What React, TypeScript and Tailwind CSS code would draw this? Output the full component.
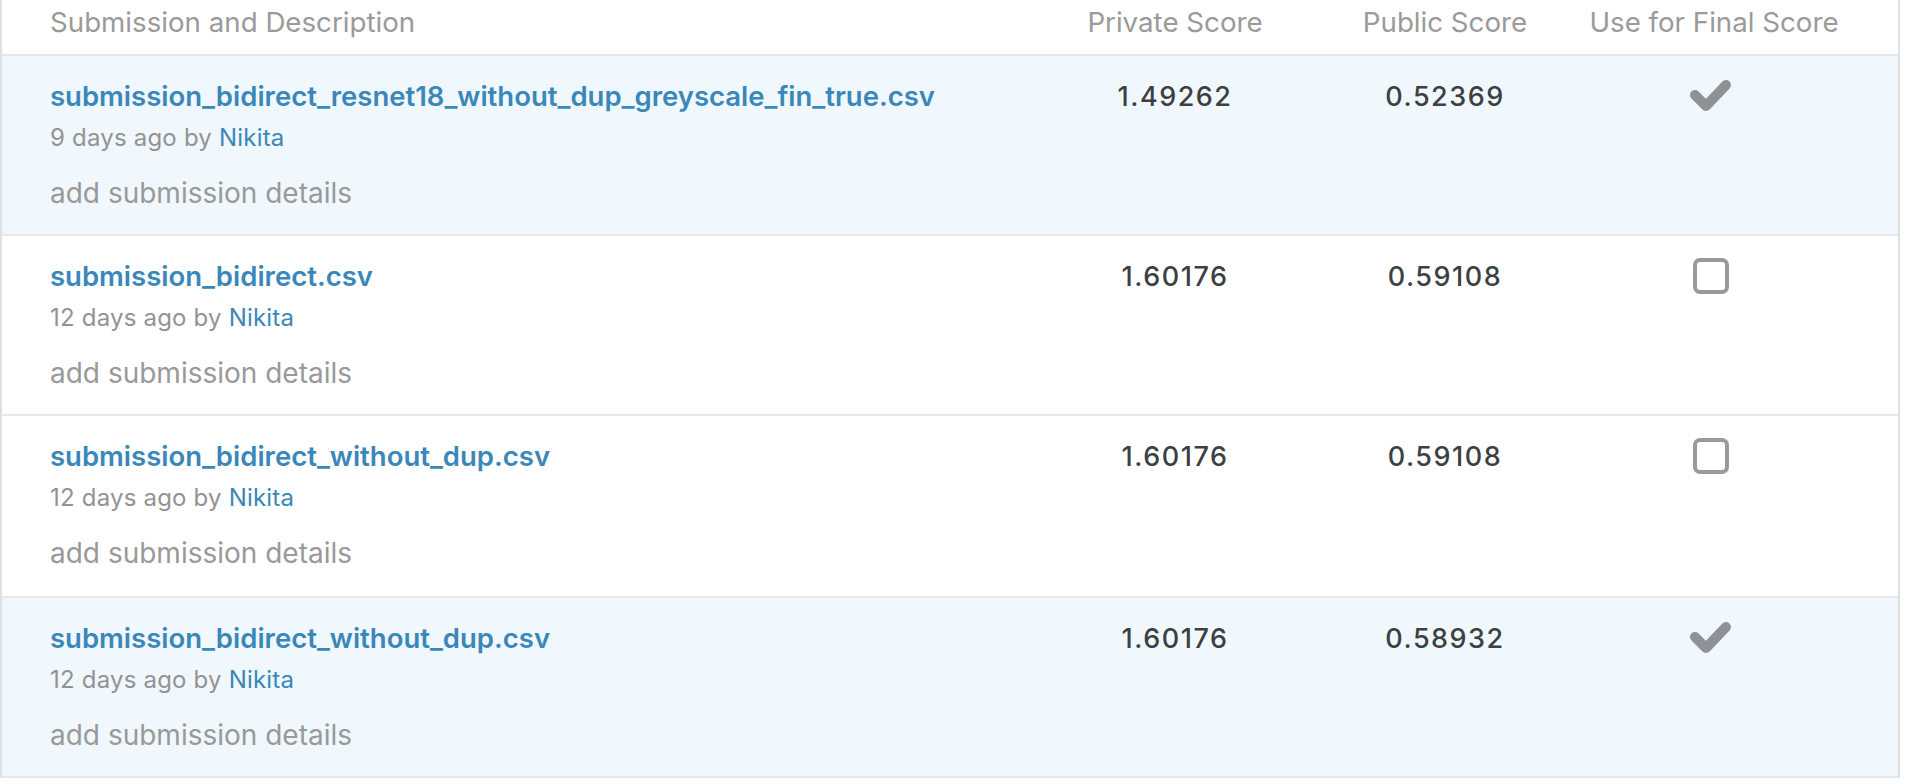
import React from "react";

interface Submission {
  file: string;
  ago: string;
  author: string;
  privateScore: string;
  publicScore: string;
  selected: boolean;
}

const submissions: Submission[] = [
  {
    file: "submission_bidirect_resnet18_without_dup_greyscale_fin_true.csv",
    ago: "9 days ago",
    author: "Nikita",
    privateScore: "1.49262",
    publicScore: "0.52369",
    selected: true,
  },
  {
    file: "submission_bidirect.csv",
    ago: "12 days ago",
    author: "Nikita",
    privateScore: "1.60176",
    publicScore: "0.59108",
    selected: false,
  },
  {
    file: "submission_bidirect_without_dup.csv",
    ago: "12 days ago",
    author: "Nikita",
    privateScore: "1.60176",
    publicScore: "0.59108",
    selected: false,
  },
  {
    file: "submission_bidirect_without_dup.csv",
    ago: "12 days ago",
    author: "Nikita",
    privateScore: "1.60176",
    publicScore: "0.58932",
    selected: true,
  },
];

const cols = "grid grid-cols-[1fr_270px_270px_268px] pl-[48px] pr-[50px]";

const Check = () => (
  <svg width="45" height="35" viewBox="0 0 45 35">
    <polyline
      points="7,17 18,28 38,7"
      fill="none"
      stroke="#8e9195"
      strokeWidth="10"
      strokeLinecap="round"
      strokeLinejoin="round"
    />
  </svg>
);

const Row: React.FC<{ s: Submission; tall?: boolean }> = ({ s, tall }) => (
  <div
    className={`${cols} ${tall ? "h-[182px]" : "h-[180px]"} border-b-2 border-[#e6e9ed] ${
      s.selected ? "bg-[#f0f7fd]" : "bg-white"
    }`}
  >
    <div className="pt-[23px]">
      <div className="text-[27.5px] leading-[34px] font-semibold text-[#3a87ba]">
        {s.file}
      </div>
      <div className="mt-[10px] text-[24px] leading-[30px] tracking-[0.2px] text-[#939393]">
        {s.ago} by <span className="text-[#3a87ba]">{s.author}</span>
      </div>
      <div className="mt-[23px] text-[28px] leading-[34px] text-[#999999]">
        add submission details
      </div>
    </div>
    <div className="pt-[24px] text-center text-[27px] leading-[34px] tracking-[1.5px] font-medium text-[#3c4043]">
      {s.privateScore}
    </div>
    <div className="pt-[24px] text-center text-[27px] leading-[34px] tracking-[1.5px] font-medium text-[#3c4043]">
      {s.publicScore}
    </div>
    <div className="pt-[22px] pr-[7px] flex justify-center items-start">
      {s.selected ? (
        <Check />
      ) : (
        <div className="w-[36px] h-[36px] rounded-[7px] border-[4px] border-[#9a9a9a] bg-white" />
      )}
    </div>
  </div>
);

export default function App() {
  return (
    <div className="w-[1918px] h-[782px] bg-white overflow-hidden font-['Inter',sans-serif]">
      <div className="w-[1900px] border-x-2 border-[#e0e0e0]">
        <div className={`${cols} h-[56px] pt-[6px] border-b-2 border-[#e3e6ea] text-[27.7px] leading-[32px] text-[#9a9a9a]`}>
          <div>Submission and Description</div>
          <div className="text-center">Private Score</div>
          <div className="text-center">Public Score</div>
          <div className="text-center">Use for Final Score</div>
        </div>
        {submissions.map((s, i) => (
          <Row key={i} s={s} tall={i === 2} />
        ))}
      </div>
    </div>
  );
}
